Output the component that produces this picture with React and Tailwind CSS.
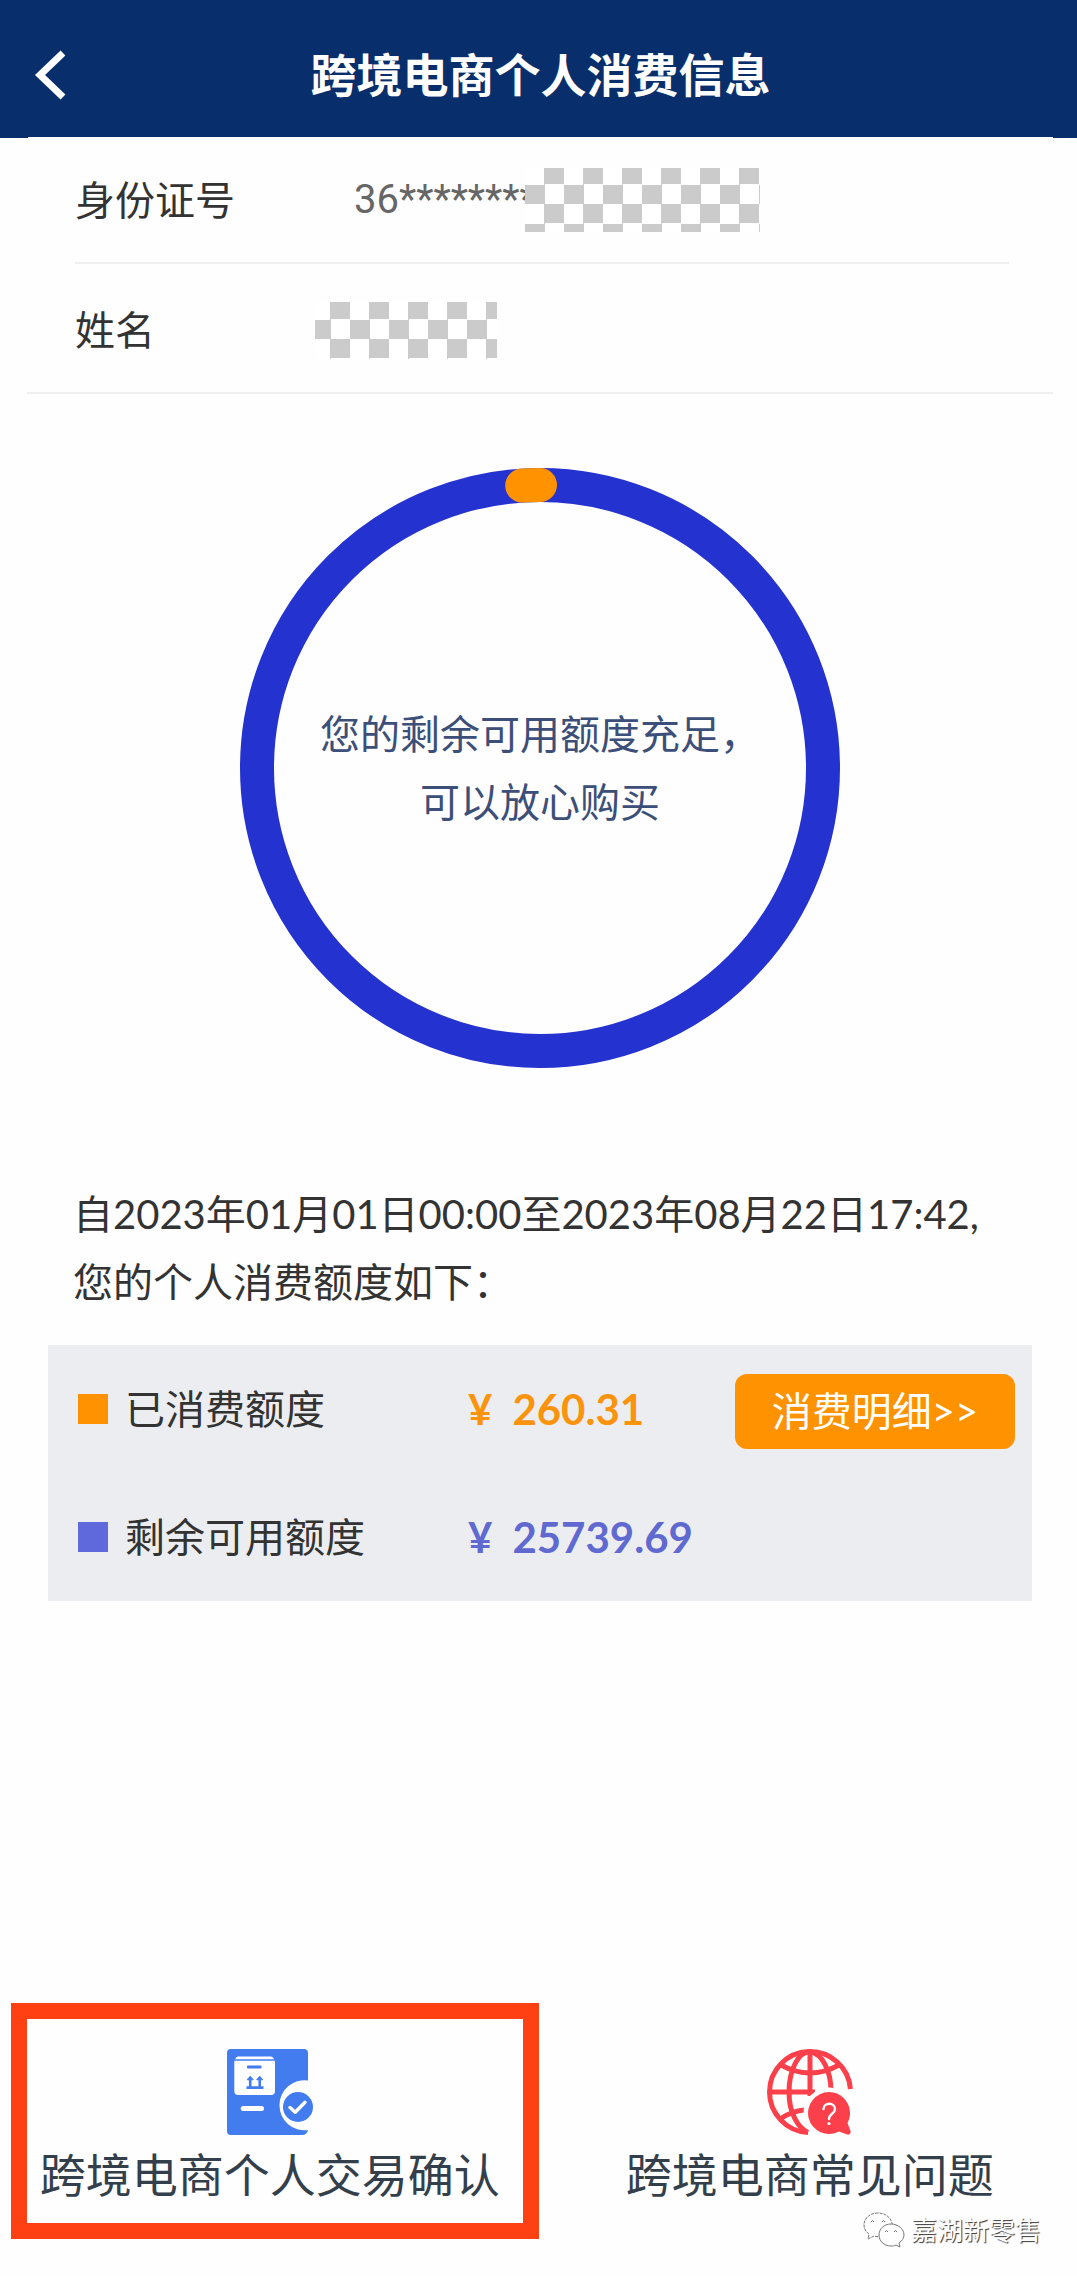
const QUOTA = { used: 260.31, left: 25739.69 };

const RING_SIZE = 600;
const RING_STROKE = 34;

const BackIcon = () => (
    <svg className="h-[50px] w-8" viewBox="0 0 32 50" fill="none" stroke="currentColor" strokeWidth="7" aria-hidden="true">
        <path d="M29 3L6 25l23 22" />
    </svg>
);

const ConfirmIcon = () => (
    <svg className="h-[86px] w-[86px]" viewBox="0 0 86 86" fill="none" aria-hidden="true">
        <path
            fill="#437cee"
            d="M4 0h73a4 4 0 014 4v27.5a25 25 0 100 49.5q-1 5-6 5H4a4 4 0 01-4-4V4a4 4 0 014-4z"
        />
        <path fill="#fff" d="M11 7.5h33q2 0 3 2.7H8q1-2.7 3-2.7z" />
        <path fill="#fff" d="M7.3 11.8H48V42a4 4 0 01-4 4H11.3a4 4 0 01-4-4z" />
        <rect x="20" y="16.5" width="14.5" height="3" rx="1" fill="#437cee" />
        <path stroke="#437cee" strokeWidth="2.6" d="M19.5 38.6h17M23.2 38V30M32.7 38V30" />
        <path fill="#437cee" stroke="#437cee" strokeWidth="1" strokeLinejoin="round" d="M23.2 27.2l3 3.6h-6zM32.7 27.2l3 3.6h-6z" />
        <rect x="13.7" y="57" width="23.3" height="5" rx="2.5" fill="#fff" />
        <circle cx="71" cy="58" r="15" fill="#437cee" />
        <path stroke="#fff" strokeWidth="3.4" strokeLinecap="round" strokeLinejoin="round" d="M63 58.5l5.2 4.8 9.8-10" />
    </svg>
);

const FaqIcon = () => (
    <svg className="h-[86px] w-[86px]" viewBox="0 0 86 86" fill="none" aria-hidden="true">
        <g stroke="#fb404b" strokeWidth="5">
            <path d="M83.4 40A40.5 40.5 0 1041 83.5" />
            <path d="M43 3v44M3 43h45" />
            <path d="M64 42C64 22 55 4 43 3S22 22 22 43s9 36 19 40.5" />
            <path d="M14 16q29 16 58 0M13 70q12-8 24-9" />
        </g>
        <circle cx="62" cy="64" r="25.5" fill="#fff" />
        <path
            fill="#fb404b"
            d="M62 43a21 21 0 0121 21c0 4-1 7-2.5 10l3 8c.7 2.5-1 4-3.3 3.6L72 82.5A21 21 0 1162 43z"
        />
        <path stroke="#fff" strokeWidth="2.4" strokeLinecap="round" d="M56.5 60c0-7 11.5-7 11.5 0 0 5-6 4.5-6 10" />
        <circle cx="62" cy="74.5" r="1.6" fill="#fff" />
    </svg>
);

const ChatIcon = () => (
    <svg className="h-9 w-[42px]" viewBox="0 0 42 36" fill="#fff" stroke="#777" strokeWidth="1" aria-hidden="true">
        <path strokeDasharray="3 1" d="M15 1C7 1 1 6 1 13c0 4 2 7 5 9l-1 5 6-3c2 .5 4 1 6 .5C30 24 30 14 29 11 27 4 21 1 15 1z" />
        <path d="M28 12c-7 0-12 5-12 11s5 11 12 11c2 0 3 0 5-1l4 2-1-4c3-2 5-5 5-8 0-6-6-11-13-11z" />
        <path fill="none" d="M8 10q1.5-3 3 0M19 10q1.5-3 3 0M22 20q1.5-3 3 0M31 20q1.5-3 3 0" />
    </svg>
);

const Mosaic = ({ className }) => (
    <span
        aria-hidden="true"
        className={`bg-[conic-gradient(#cbcbcb_25%,#fff_0_50%,#cbcbcb_0_75%,#fff_0)] bg-size-[39px_39px] ${className}`}
    />
);

const QuotaRing = ({ children }) => {
    const c = RING_SIZE / 2;
    const r = (RING_SIZE - RING_STROKE) / 2;
    // used share, drawn counter-clockwise from the top
    const angle = (QUOTA.used / (QUOTA.used + QUOTA.left)) * 2 * Math.PI;
    const x = c - r * Math.sin(angle);
    const y = c - r * Math.cos(angle);

    return (
        <div className="grid place-items-center *:col-start-1 *:row-start-1">
            <svg className="h-[600px] w-[600px]" viewBox={`0 0 ${RING_SIZE} ${RING_SIZE}`} fill="none" aria-hidden="true">
                <circle cx={c} cy={c} r={r} stroke="#2432cf" strokeWidth={RING_STROKE} />
                <path
                    d={`M${c} ${c - r}A${r} ${r} 0 0 0 ${x} ${y}`}
                    stroke="#ff9200"
                    strokeWidth={RING_STROKE}
                    strokeLinecap="round"
                />
            </svg>
            {children}
        </div>
    );
};

const QuotaRow = ({ label, amount, swatch, color, children }) => (
    <div className="flex h-32 items-center pl-[30px] pr-[17px]">
        <span className={`size-[30px] ${swatch}`} />
        <dt className="w-[360px] pl-[17px]">{label}</dt>
        <dd className={`flex flex-1 gap-5 text-[42px] font-bold ${color}`}>
            <span>¥</span>
            <span>{amount}</span>
        </dd>
        {children}
    </div>
);

const App = () => {
    return (
        <div className="relative flex min-h-screen flex-col bg-[#fefefe] font-['Lato','Noto_Sans_CJK_SC',sans-serif] text-[40px] leading-[68px] text-[#333]">
            {/* Title bar */}
            <header className="bg-[#082f6b] pl-7 pr-6">
                <div className="grid h-[137px] grid-cols-[64px_1fr_64px] items-center pt-3">
                    <button type="button" aria-label="返回" className="cursor-pointer pl-1.5 text-white">
                        <BackIcon />
                    </button>
                    <h1 className="text-center text-[46px] font-bold text-white">跨境电商个人消费信息</h1>
                </div>
                <div className="h-px bg-white" />
            </header>

            <main className="ml-[27px] mr-6">
                {/* Identity */}
                <dl className="border-b-2 border-[#f0f0f0] pl-12 pr-11">
                    <div className="flex h-[126px] items-center border-b-2 border-[#f0f0f0]">
                        <dt className="w-[279px]">身份证号</dt>
                        <dd className="flex items-center text-[#666]">
                            <span className="font-['Roboto',sans-serif]">36********</span>
                            <Mosaic className="relative -ml-3 h-16 w-[235px] bg-position-[0_-3px]" />
                        </dd>
                    </div>
                    <div className="flex h-32 items-center pt-1">
                        <dt className="w-[240px]">姓名</dt>
                        <dd className="flex">
                            <Mosaic className="h-[57px] w-[182px] bg-position-[-4px_-2px]" />
                        </dd>
                    </div>
                </dl>

                <section className="pt-[74px]">
                    <QuotaRing>
                        <p className="text-center text-[#3c4f78]">
                            您的剩余可用额度充足，
                            <br />
                            可以放心购买
                        </p>
                    </QuotaRing>
                </section>

                <p className="pl-[46px] pt-28">
                    自2023年01月01日00:00至2023年08月22日17:42,
                    <br />
                    您的个人消费额度如下：
                </p>

                {/* Quota summary */}
                <dl className="ml-[21px] mr-[21px] mt-[29px] bg-[#ebedf1]">
                    <QuotaRow label="已消费额度" amount={QUOTA.used} swatch="bg-[#ff9200]" color="text-[#fb930c]">
                        <button type="button" className="mt-1 h-[75px] w-[280px] cursor-pointer rounded-xl bg-[#ff9200] text-white">
                            消费明细&gt;&gt;
                        </button>
                    </QuotaRow>
                    <QuotaRow label="剩余可用额度" amount={QUOTA.left} swatch="bg-[#6069dc]" color="text-[#6069d0]" />
                </dl>
            </main>

            {/* Bottom entries */}
            <nav className="mt-auto grid grid-cols-2 pb-[37px] pt-12 text-[46px] text-[#33404c]">
                <a
                    href="#confirm"
                    className="ml-[11px] flex h-[236px] flex-col items-center gap-1.5 border-16 border-[#ff4013] pr-2.5 pt-[30px]"
                >
                    <ConfirmIcon />
                    <span className="whitespace-nowrap">跨境电商个人交易确认</span>
                </a>
                <a href="#faq" className="flex flex-col items-center gap-1.5 pl-1 pt-[46px]">
                    <FaqIcon />
                    <span className="whitespace-nowrap">跨境电商常见问题</span>
                </a>
            </nav>

            {/* Watermark */}
            <div className="absolute bottom-7 right-9 flex items-center gap-1.5 text-[26px] leading-9 text-white [text-shadow:1px_1px_1px_#333]">
                <ChatIcon />
                <span>嘉湖新零售</span>
            </div>
        </div>
    );
};

export default App;
